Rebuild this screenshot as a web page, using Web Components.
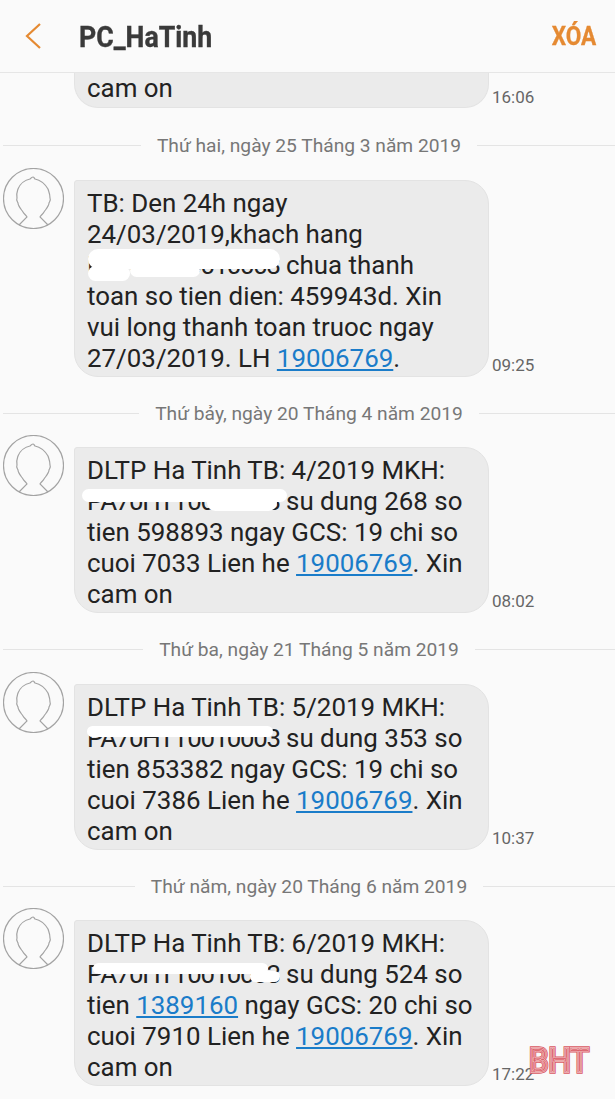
<!DOCTYPE html>
<html>
<head>
<meta charset="utf-8">
<style>
  html, body { margin: 0; background: #fafafa; }
  body { width: 615px; height: 1099px; overflow: hidden; font-family: Roboto, "Noto Sans", sans-serif; position: relative; }
  sms-message > a { color: #1a7cc9; }
  sms-message > span { letter-spacing: -1.36px; }
</style>
</head>
<body>
<sms-header title="PC_HaTinh" action="XÓA"></sms-header>
<sms-thread>
  <sms-message time="16:06" cut>cam on</sms-message>

  <day-divider>Thứ hai, ngày 25 Tháng 3 năm 2019</day-divider>
  <sms-message time="09:25">TB: Den 24h ngay<br>24/03/2019,khach hang<br><span>PA70HTT0010003</span> chua thanh<br>toan so tien dien: 459943d. Xin<br>vui long thanh toan truoc ngay<br>27/03/2019. LH <a href="#">19006769</a>.
    <text-blot slot="blot" style="left:13px;top:68px;width:192px;height:20px"></text-blot>
    <text-blot slot="blot" style="left:13px;top:85px;width:42px;height:15px"></text-blot>
    <text-blot slot="blot" style="left:55px;top:83px;width:70px;height:13px"></text-blot>
  </sms-message>

  <day-divider>Thứ bảy, ngày 20 Tháng 4 năm 2019</day-divider>
  <sms-message time="08:02">DLTP Ha Tinh TB: 4/2019 MKH:<br><span>PA70HTT0010003</span> su dung 268 so<br>tien 598893 ngay GCS: 19 chi so<br>cuoi 7033 Lien he <a href="#">19006769</a>. Xin<br>cam on
    <text-blot slot="blot" style="left:7px;top:41px;width:205px;height:13px"></text-blot>
    <text-blot slot="blot" style="left:132px;top:46px;width:70px;height:17px"></text-blot>
  </sms-message>

  <day-divider>Thứ ba, ngày 21 Tháng 5 năm 2019</day-divider>
  <sms-message time="10:37">DLTP Ha Tinh TB: 5/2019 MKH:<br><span>PA70HTT0010003</span> su dung 353 so<br>tien 853382 ngay GCS: 19 chi so<br>cuoi 7386 Lien he <a href="#">19006769</a>. Xin<br>cam on
    <text-blot slot="blot" style="left:12px;top:41px;width:186px;height:11px"></text-blot>
  </sms-message>

  <day-divider>Thứ năm, ngày 20 Tháng 6 năm 2019</day-divider>
  <sms-message time="17:22">DLTP Ha Tinh TB: 6/2019 MKH:<br><span>PA70HTT0010003</span> su dung 524 so<br>tien <a href="#">1389160</a> ngay GCS: 20 chi so<br>cuoi 7910 Lien he <a href="#">19006769</a>. Xin<br>cam on
    <text-blot slot="blot" style="left:18px;top:42px;width:175px;height:11px"></text-blot>
    <text-blot slot="blot" style="left:175px;top:50px;width:30px;height:11px"></text-blot>
  </sms-message>
</sms-thread>
<bht-mark></bht-mark>

<script>
// cabecera con volver, nombre y accion
class SmsHeader extends HTMLElement {
  constructor() {
    super()
    this.attachShadow({mode: 'open'})
  }
  connectedCallback() {
    this.shadowRoot.innerHTML = `
      <style>
        :host { display: flex; align-items: center; height: 72px; background: #fafafa; border-bottom: 1px solid #e6e6e6; }
        svg { margin-left: 25px; width: 16px; height: 28px; flex: none; }
        h1 { margin: 0 0 0 38px; flex: 1; font: 700 30px Roboto, sans-serif; color: #3a3a3a; -webkit-text-stroke: .4px #3a3a3a; transform: scaleX(.89); transform-origin: left center; }
        span { margin-right: 19px; font: 700 26px Roboto, sans-serif; color: #e58a32; -webkit-text-stroke: .3px #e58a32; transform: scaleX(.87); transform-origin: right center; }
      </style>
      <svg viewBox="0 0 16 28"><path d="M15 2 2 14l13 12" fill="none" stroke="#e58a32" stroke-width="2.2"/></svg>
      <h1>${this.getAttribute('title')}</h1>
      <span>${this.getAttribute('action')}</span>`
  }
}

class SmsThread extends HTMLElement {
  constructor() {
    super()
    this.attachShadow({mode: 'open'})
    this.shadowRoot.innerHTML = `
      <style>
        :host { display: flex; flex-direction: column; }
      </style>
      <slot></slot>`
  }
}

class DayDivider extends HTMLElement {
  constructor() {
    super()
    this.attachShadow({mode: 'open'})
    this.shadowRoot.innerHTML = `
      <style>
        :host { display: flex; align-items: center; gap: 16px; height: 24px; margin: 24.5px 0 10px 3px; font: 19.2px Roboto, sans-serif; color: #777; white-space: nowrap; }
        i { flex: 1; height: 1px; background: #e4e4e4; }
      </style>
      <i></i><slot></slot><i></i>`
  }
}

// fila de mensaje: avatar, burbuja y hora
class SmsMessage extends HTMLElement {
  constructor() {
    super()
    this.attachShadow({mode: 'open'})
  }
  connectedCallback() {
    const cut = this.hasAttribute('cut')
    this.shadowRoot.innerHTML = `
      <style>
        :host { display: flex; align-items: flex-end; padding-left: 3px; ${cut ? 'margin-bottom: 1px;' : ''} }
        .avatar { width: 61px; height: 61px; flex: none; align-self: flex-start; margin-right: 10px; }
        .spacer { width: 61px; flex: none; margin-right: 10px; }
        .bubble { position: relative; box-sizing: border-box; width: 415px; margin-top: ${cut ? 0 : 12}px; padding: ${cut ? '0 12px 3px' : '7px 12px 2px'}; background: #ebebeb; border: 1px solid #e3e3e3; ${cut ? 'border-top: 0;' : ''} border-radius: ${cut ? '0 0 24px 24px' : '3px 24px 24px 24px'}; font: 25.9px/31px Roboto, sans-serif; color: #222; white-space: nowrap; }
        time { margin: 0 0 ${cut ? 0 : 1}px 3px; font: 17px/22px Roboto, sans-serif; color: #666; }
      </style>
      ${cut ? '<div class="spacer"></div>' : `<svg class="avatar" viewBox="0 0 61 61">
        <circle cx="30.5" cy="30.5" r="30" fill="#fafafa" stroke="#a3a3a3" stroke-width="1.2"/>
        <path d="M16 57 24 49C23 47 21 46 20 44 18 41 15 38 15 35 14 33 13 32 14 30 13 26 14 24 15 21 17 16 22 12 27 11 28 10 29 9 30 9 31 9 31 10 32 11 37 12 42 16 45 21 46 24 47 26 47 30 48 32 47 33 46 35 46 38 43 41 41 44 40 46 38 47 37 49L45 57" fill="none" stroke="#a3a3a3" stroke-width="1.2"/>
      </svg>`}
      <div class="bubble"><slot></slot><slot name="blot"></slot></div>
      <time>${this.getAttribute('time')}</time>`
  }
}

// mancha blanca que tapa el codigo del cliente
class TextBlot extends HTMLElement {
  constructor() {
    super()
    this.attachShadow({mode: 'open'})
    this.shadowRoot.innerHTML = `
      <style>
        :host { position: absolute; display: block; background: #fff; border-radius: 10px; filter: blur(.6px); }
      </style>`
  }
}

// marca de agua BHT
class BhtMark extends HTMLElement {
  constructor() {
    super()
    this.attachShadow({mode: 'open'})
    this.shadowRoot.innerHTML = `
      <style>
        :host { position: absolute; left: 524px; top: 1042px; width: 70px; height: 36px; display: block; }
        svg { display: block; }
        text { font: 400 34px Roboto, sans-serif; }
      </style>
      <svg width="70" height="36" viewBox="0 0 70 36">
        <defs><text id="b" x="5" y="29.5" textLength="60" lengthAdjust="spacingAndGlyphs">BHT</text></defs>
        <use href="#b" fill="none" stroke="#d95862" stroke-width="3.6"/>
        <use href="#b" fill="none" stroke="#f4c6c9" stroke-width="1.8"/>
        <use href="#b" fill="none" stroke="#d95862" stroke-width=".6"/>
      </svg>`
  }
}

customElements.define('sms-header', SmsHeader)
customElements.define('sms-thread', SmsThread)
customElements.define('day-divider', DayDivider)
customElements.define('sms-message', SmsMessage)
customElements.define('text-blot', TextBlot)
customElements.define('bht-mark', BhtMark)
</script>
</body>
</html>
